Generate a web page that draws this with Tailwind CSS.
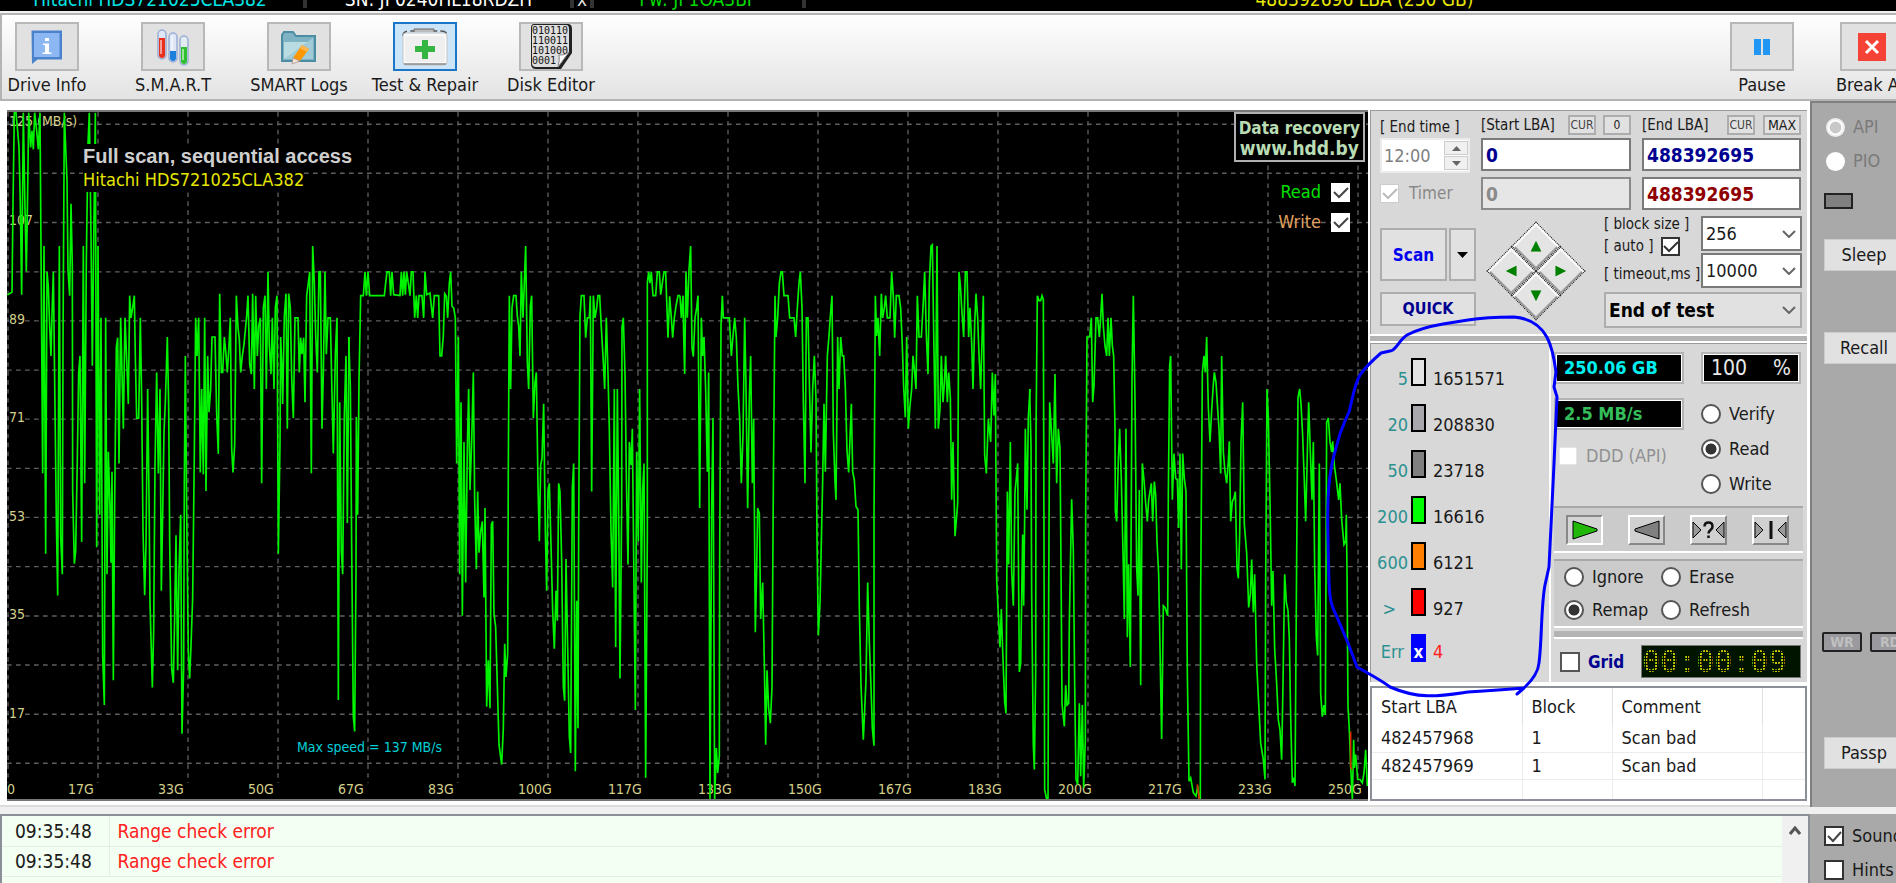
<!DOCTYPE html>
<html lang="en">
<head>
<meta charset="utf-8">
<title>Drive test and repair</title>
<script src="https://cdn.jsdelivr.net/npm/@tailwindcss/browser@4"></script>
</head>
<body class="relative flex min-h-screen flex-col overflow-hidden bg-[#f0f0f0] font-['DejaVu_Sans_Condensed','Noto_Sans',sans-serif] text-[17px] leading-5 text-[#1a1a1a]">

<!-- Drive identification strip -->
<header class="flex h-[11px] shrink-0 items-end gap-[3px] overflow-hidden bg-black pb-[3px] text-[19px] leading-[18px] whitespace-nowrap">
  <div class="w-[300px] shrink-0 text-center text-[#00e5e5]">Hitachi HDS721025CLA382</div>
  <div class="h-7 w-1 shrink-0 bg-[#333]"></div>
  <div class="w-[257px] shrink-0 text-center text-white">SN: JP0240HL18RDZH</div>
  <button class="h-[18px] w-6 shrink-0 border-x-4 border-[#333] text-center text-[#ddd]">x</button>
  <div class="w-[202px] shrink-0 text-center text-[#00d800]">Fw: JP1OA3BF</div>
  <div class="h-7 w-1 shrink-0 bg-[#333]"></div>
  <div class="grow pl-6 text-center text-[#e8e800]">488392696 LBA (250 GB)</div>
</header>

<!-- Toolbar -->
<nav class="mt-0.5 flex h-[88px] w-full shrink-0 justify-between border-t-2 border-b-2 border-l-2 border-[#b4b4b4] bg-linear-to-b from-white to-[#e3e3e3] text-[18px] whitespace-nowrap">
  <div class="-ml-[18px] flex pt-[7px]">
    <button class="flex w-[126px] flex-col items-center gap-1">
      <span class="flex h-[49px] w-16 items-center justify-center border-2 border-[#b8b8b8] bg-[#e1e1e1]">
        <svg width="34" height="36" viewBox="0 0 34 36"><path d="M1.500 1.500H32v29H7.500L2 35z" fill="#4a82cc"/><path d="M4 4h25.500v24H4z" fill="#8cb7f2"/><path d="M15 9h4v3h-4zM13 14.500h6v9h2.500V25H12.500v-1.500H15V16h-2z" fill="#fff"/></svg>
      </span>Drive Info
    </button>
    <button class="flex w-[126px] flex-col items-center gap-1">
      <span class="flex h-[49px] w-16 items-center justify-center border-2 border-[#b8b8b8] bg-[#e1e1e1]">
        <svg width="34" height="38" viewBox="0 0 34 38"><g stroke-width="1.500"><rect x="2" y="2" width="8" height="29" rx="4" fill="#dfe7f6" stroke="#9aaed4"/><path d="M3 10h6v17a3 3 0 0 1-6 0z" fill="#e8301c"/><rect x="13" y="5" width="8" height="29" rx="4" fill="#dfe7f6" stroke="#9aaed4"/><path d="M14 23h6v7a3 3 0 0 1-6 0z" fill="#1d7fdc"/><rect x="24" y="8" width="8" height="29" rx="4" fill="#e3ecf0" stroke="#9aaed4"/><path d="M25 19h6v14a3 3 0 0 1-6 0z" fill="#2fc02f"/></g><path d="M5 12v14M16 8v14M27 21v11" stroke="#fff" stroke-width="1.500" opacity=".7"/></svg>
      </span>S.M.A.R.T
    </button>
    <button class="flex w-[126px] flex-col items-center gap-1">
      <span class="flex h-[49px] w-16 items-center justify-center border-2 border-[#b8b8b8] bg-[#e1e1e1]">
        <svg width="38" height="36" viewBox="0 0 38 36"><path d="M2 32V6l2-3h9l3 4h19v25z" fill="#7fb3c4" stroke="#4d8da4" stroke-width="2"/><path d="M4 13h29v17H4z" fill="#b9dbe2"/><path d="M4 30 33 9v21z" fill="#a1cbd6"/><path d="m22 16 7 4-9 12-7-3z" fill="#ff9800"/><path d="m13 29 7 3-8 3z" fill="#f3e5d5" stroke="#a88" stroke-width=".7"/><path d="m22 16 7 4-2 3-7-4z" fill="#ffb74d"/></svg>
      </span>SMART Logs
    </button>
    <button class="flex w-[126px] flex-col items-center gap-1">
      <span class="flex h-[49px] w-16 items-center justify-center border-2 border-[#1b76c8] bg-[#cce4f7]">
        <svg width="48" height="40" viewBox="0 0 48 40"><path d="M2 9Q2 4 8 4h32q6 0 6 5" fill="none" stroke="#555" stroke-width="1.500" stroke-dasharray="7 3"/><path d="M13 5V2h20v3" fill="#bbb" stroke="#666"/><rect x="2" y="6" width="44" height="32" rx="3" fill="#fafafa" stroke="#c4c4c4"/><rect x="4" y="9" width="40" height="26" rx="2" fill="#efefef"/><path d="M3 37h42" stroke="#888" stroke-width="1.500"/><path d="M21 13h6v6h7v6h-7v7h-6v-7h-7v-6h7z" fill="#35b542"/></svg>
      </span>Test &amp; Repair
    </button>
    <button class="flex w-[126px] flex-col items-center gap-1">
      <span class="flex h-[49px] w-16 items-center justify-center border-2 border-[#b8b8b8] bg-[#e1e1e1]">
        <svg width="44" height="48" viewBox="0 0 44 48"><path d="M5 1h34q4 0 4 5v24L32 46H7q-5 0-5-5V5q0-4 3-4z" fill="#222"/><path d="M5 2h32q3 0 3 4v23L29 44H7q-4 0-4-4V5q0-3 2-3z" fill="#dedede"/><g fill="#111" font-family="DejaVu Sans Mono" font-size="10"><text x="3" y="11">010110</text><text x="3" y="21">110011</text><text x="3" y="31">101000</text><text x="3" y="41">0001</text></g><path d="M29 44q2-7 1-12 5 1 10-3z" fill="#fff" stroke="#888"/></svg>
      </span>Disk Editor
    </button>
  </div>
  <div class="flex gap-[46px] pt-[7px]">
    <button class="flex w-16 flex-col items-center gap-1">
      <span class="flex h-[49px] w-16 items-center justify-center border-2 border-[#b8b8b8] bg-[#e1e1e1]">
        <svg width="16" height="16"><path d="M0 0h7v16H0zM9 0h7v16H9z" fill="#2196f3"/></svg>
      </span>Pause
    </button>
    <button class="-mr-2 flex w-16 flex-col items-start gap-1">
      <span class="flex h-[49px] w-16 items-center justify-center border-2 border-[#b8b8b8] bg-[#e1e1e1]">
        <svg width="28" height="28"><path d="M0 0h28v28H0z" fill="#f44336"/><path d="m8 8 12 12M20 8 8 20" stroke="#fff" stroke-width="3"/></svg>
      </span><span class="-ml-1">Break All</span>
    </button>
  </div>
</nav>

<main class="flex shrink-0">
  <div class="flex min-w-0 grow border-b-2 border-[#dcdcdc] bg-white pt-[9px] pb-1 pl-[7px]">

    <!-- Speed graph -->
    <section class="relative min-w-0 grow overflow-hidden border-y-2 border-[#777] bg-black text-sm leading-4 text-[#d4d08a]">
      <svg class="absolute inset-0 h-full w-full" viewBox="21 33 4083 2076" preserveAspectRatio="none">
        <g stroke="#5f5f5f" stroke-width="4" stroke-dasharray="14 13">
          <path d="M24 33V2060M294 33V2060M564 33V2060M834 33V2060M1104 33V2060M1374 33V2060M1644 33V2060M1914 33V2060M2184 33V2060M2454 33V2060M2724 33V2060M2994 33V2060M3264 33V2060M3534 33V2060M3804 33V2060M4074 33V2060"/>
          <path d="M21 70H4104M21 218H4104M21 367H4104M21 516H4104M21 664H4104M21 813H4104M21 961H4104M21 1110H4104M21 1258H4104M21 1407H4104M21 1556H4104M21 1704H4104M21 1853H4104M21 2001H4104"/>
        </g>
      </svg>
      <div class="absolute inset-0 left-0.5">
        <span class="absolute top-[0.2%]">125 (MB/s)</span>
        <span class="absolute top-[14.500%] bg-black">107</span>
        <span class="absolute top-[28.900%] bg-black">89</span>
        <span class="absolute top-[43.200%] bg-black">71</span>
        <span class="absolute top-[57.600%] bg-black">53</span>
        <span class="absolute top-[71.900%] bg-black">35</span>
        <span class="absolute top-[86.300%] bg-black">17</span>
      </div>
      <div class="absolute inset-x-0 bottom-0.5 flex overflow-hidden whitespace-nowrap">
        <span class="w-[4.480%] shrink-0">0</span>
        <span class="w-[6.613%] shrink-0">17G</span><span class="w-[6.613%] shrink-0">33G</span><span class="w-[6.613%] shrink-0">50G</span><span class="w-[6.613%] shrink-0">67G</span><span class="w-[6.613%] shrink-0">83G</span><span class="w-[6.613%] shrink-0">100G</span><span class="w-[6.613%] shrink-0">117G</span><span class="w-[6.613%] shrink-0">133G</span><span class="w-[6.613%] shrink-0">150G</span><span class="w-[6.613%] shrink-0">167G</span><span class="w-[6.613%] shrink-0">183G</span><span class="w-[6.613%] shrink-0">200G</span><span class="w-[6.613%] shrink-0">217G</span><span class="w-[6.613%] shrink-0">233G</span><span>250G</span>
      </div>
      <svg class="absolute inset-0 h-full w-full" viewBox="21 33 4083 2076" preserveAspectRatio="none" fill="none" stroke="#00f400" stroke-width="5">
        <path d="M22 585 36 578 39 312 43 35 48 35 53 90 57 140 61 310 65 585 70 35 74 275 79 515 83 270 86 35 92 140 96 90 100 146 104 35 110 90 115 146 120 35 124 580 128 1125 132 438 137 1368 141 516 145 560 149 680 153 770 156 645 160 516 165 925 169 1262 173 1494 178 438 182 1316 187 1430 189 735 193 35 197 140 201 238 204 510 209 588 213 310 217 500 218 1178 223 1398 227 1360 232 1080 236 820 240 770 245 1332 250 438 254 1155 259 480 264 130 268 35 273 405 277 800 281 435 286 35 290 1348 294 438 299 1250 303 655 308 1675 313 1825 317 655 321 1430 325 1060 330 1230 333 1395 336 1120 340 1750 344 1210 349 745 353 715 357 1095 362 655 366 820 370 990 375 655 380 780 385 915 389 588 393 655 398 625 403 588 406 775 410 958 416 958 421 655 425 905 429 1295 434 1493 438 1340 443 870 447 1190 450 1515 457 1772 461 1600 465 1100 470 820 475 1125 480 870 484 1480 488 1250 492 1000 496 910 502 713 506 920 509 1330 515 1715 520 1758 524 1560 528 1312 533 1720 537 1420 542 1250 546 1912 551 1710 553 1145 556 770 560 1240 565 1666 569 1745 573 1645 578 1500 583 1060 587 655 591 770 596 655 601 1122 605 870 610 1128 614 655 618 1178 623 770 627 940 632 870 636 713 645 713 650 945 655 1066 659 582 664 820 668 820 673 713 678 765 682 820 687 740 691 655 695 1050 699 1122 704 1040 709 588 714 685 718 720 722 820 727 770 732 735 740 650 744 588 749 795 754 825 758 582 763 870 767 588 772 770 776 680 781 655 785 1155 790 625 795 588 799 870 804 516 808 740 813 825 817 655 822 870 826 625 831 588 835 1368 840 1035 842 713 846 815 848 915 853 650 858 582 862 990 866 582 871 625 875 835 880 958 885 655 894 655 898 820 902 715 906 765 911 715 915 910 920 588 925 550 929 516 934 1125 938 438 943 550 947 705 952 820 957 516 961 516 966 990 970 820 975 516 979 765 984 655 991 655 995 840 1000 1065 1006 765 1011 655 1015 1810 1019 910 1024 1360 1028 1430 1033 950 1038 770 1042 1275 1047 713"/>
        <path transform="translate(1020)" d="M26 713 31 860 35 1345 40 1860 44 1905 48 1430 49 955 53 1250 57 845 62 588 70 588 75 516 79 588 84 516 89 588 133 588 137 550 141 516 148 516 152 588 156 516 161 585 180 588 184 516 188 588 192 516 196 585 200 516 205 550 210 588 214 516 219 516 224 655 229 588 233 655 237 588 246 588 251 655 255 516 260 585 270 580 274 620 278 655 283 588 296 588 300 770 305 770 310 710 314 582 319 590 323 655 328 550 332 516 336 620 341 625 346 655 350 1095 355 713 359 1430 363 910 367 1555 372 1030 377 1455 382 1050 386 870 390 1175 395 1030 400 820 404 1205 409 1415 413 1180 417 1365 422 1300 427 1270 432 1500 435 1230 440 1830 445 1690 450 1835 454 1280 458 1270 462 1550 467 1590 472 1765 477 1945 485 2005 490 1895 494 1640 498 1740 503 1670 505 1095 508 588 512 870 516 625 521 588 528 588 532 650 536 680 540 770 544 516 549 655 553 550 557 438 562 790 566 870 571 620 575 588 580 958 585 850 589 820 594 1160 598 1330 602 1100 606 1080 611 915 616 1300 620 1480 624 1180 628 1155 633 1340 638 1540 643 1655 648 1480 652 1570 656 1155 660 1180 665 1390 670 1770 674 1812 678 1384 683 1650 688 1920 692 1970 697 1170 701 1095 706 2025 710 1510 714 1895 716 1300 720 650 724 588 732 588 737 715 742 655 748 655 751 588 755 1180 760 588 765 655 770 625 774 588 779 588 784 685 789 770 794 870 799 655 804 825 808 990 813 1295 818 1470 823 870 827 1650 832 870 836 1230 840 1745 845 1225 846 685 850 655 855 825 859 1130 864 1400 868 1030 873 1100 877 990 882 1465 886 1840 890 1060 895 1330 899 870 904 1455 908 1175 912 1095 917 2045 922 1310 922 550 926 516 930 550 934 516 939 588 947 588 952 516 958 516 962 585 967 550 972 516 977 516 980 600 984 715 989 590 994 655 998 715 1003 655 1008 620 1014 588 1020 588"/>
        <path transform="translate(2040)" d="M0 588 4 655 9 588 11 705 14 825 18 516 22 655 27 510 32 438 36 745 40 772 45 655 50 625 54 588 59 1230 64 655 68 770 72 713 77 870 82 1120 86 820 90 2110 95 1230 99 958 104 2110 109 1955 113 2030 118 1980 119 1380 123 680 127 588 130 655 148 655 154 770 159 710 164 655 169 715 174 865 179 960 184 1155 189 1010 194 655 198 865 203 1230 208 900 212 770 217 1155 221 960 226 1605 230 1415 233 1230 238 1245 242 1565 248 1455 253 1700 257 1945 261 1720 266 1835 271 1880 276 1770 280 1165 285 588 288 713 293 655 298 550 303 516 307 516 312 588 324 588 329 655 342 655 347 713 352 625 357 550 361 516 366 625 370 905 375 1155 379 655 384 655 389 890 393 1062 398 870 403 770 408 900 411 1320 415 1615 420 1520 428 1145 432 915 436 1120 442 770 447 710 451 650 456 588 460 1000 465 1150 468 1205 473 713 477 870 482 713 487 770 491 770 496 865 501 1055 506 1122 510 1020 514 915 518 1120 523 1145 528 1225 534 1235 538 1530 543 1765 550 1930 554 1840 558 1750 563 1455 568 1635 573 1770 577 1895 582 1948 582 1265 586 588 590 710 594 655 599 770 604 582 608 655 613 625 617 588 622 655 630 655 635 516 640 590 644 715 649 588 657 588 662 625 667 740 671 865 676 955 680 713 685 990 690 920 695 870 699 770 704 820 708 870 712 588 717 713 724 713 729 625 734 516 739 705 744 825 748 550 753 438 757 434 762 755 766 990 771 438 775 990 780 930 784 770 789 910 793 855 797 770 802 910 806 820 811 895 815 1205 819 1030 825 1315 829 1268 833 1215 837 516 841 555 845 625 851 713 856 516 861 516 866 713 870 625 875 730 879 870 884 675 888 582 893 655 897 765 902 870 906 725 910 588 914 1070 919 1125 925 960 932 1030 937 820 942 950 946 825 950 1445 955 1550 960 1650 964 1535 968 1660 974 1815 978 1850 982 1180 986 1400 991 1030 995 1420 1000 1525 1005 1180 1010 1130 1013 1095 1018 1725 1022 1700 1028 1310 1031 1525 1034 1255 1036 990 1041 1235 1045 955 1050 870"/>
        <path transform="translate(3060)" d="M29 870 33 1040 35 1490 40 1945 43 2020 47 1730 48 1010 52 588 57 603 62 603 66 588 70 600 74 2080 80 2110 84 2110 86 1510 89 910 94 990 100 1095 105 825 110 1155 115 990 120 1050 123 1400 126 1820 133 1890 137 1765 141 1825 146 1820 148 1576 155 1203 160 1360 164 1760 168 2050 173 2065 178 1820 182 2040 187 1825 191 2075 196 1930 197 1255 201 713 209 713 214 655 218 910 222 860 228 655 233 655 238 713 242 655 246 582 250 680 255 740 260 770 264 655 268 770 273 655 277 740 281 770 285 990 286 1240 290 1270 295 1085 299 990 304 1145 309 1360 313 1565 318 990 322 1620 326 1400 331 1710 336 840 340 588 345 900 350 1410 354 1495 358 1175 362 1765 367 1095 372 1145 377 1215 382 1270 386 1205 390 1180 394 1155 398 1270 403 1150 407 1190 411 1330 416 1430 420 1650 425 1928 430 1525 435 1530 443 1555 445 1190 449 800 452 770 457 1205 462 1065 467 1140 472 1145 476 1290 480 1065 484 1415 488 1065 493 1140 498 1180 502 1730 507 2055 512 2045 520 2090 528 2100 533 2070 538 2110 541 2110 542 1490 547 820 552 770 556 820 560 713 565 925 570 1030 575 935 579 870 583 820 588 850 593 930 597 990 602 1125 605 770 610 1060 615 1120 620 1155 625 1090 628 1028 632 1270 637 1210 642 1200 646 1180 651 1410 655 1442 659 1310 663 1030 668 910 673 1280 680 1365 686 1530 691 1490 695 1385 700 1545 704 1430 710 1700 716 1820 722 1940 730 1990 735 2050 737 1455 741 870 745 955 750 1210 755 1525 759 1420 764 1655 770 1760 775 1870 780 1900 785 1990 789 1760 794 1430 799 1515 804 1540 808 1625 812 1860 817 2060 822 2045 825 2070 830 1380 834 895 839 870 843 915 848 1010 853 1150 857 1270 862 1065 866 910 871 1060 876 1205 880 1030 884 1405 889 1620 893 1675 898 1095 902 1790 907 1860 912 1825 916 1855 918 1420 920 970 925 958 930 1030 935 1060 938 1028 943 1100 949 1145 956 1205 960 1155 965 1265 972 1340 977 1330 979 1250 981 1420 984 1830 988 1900 992 2010 997 2110 1001 1930 1003 2015 1007 1975 1013 2050 1020 2050 1027 2060 1032 2030 1037 1960 1042 2070"/>
        <path transform="translate(3060)" stroke="#d42a00" d="M532 2065 538 2110M992 1905V2010L996 2020"/>
      </svg>
      <div class="absolute top-8 left-[76px] flex flex-col items-start whitespace-nowrap">
        <h1 class="bg-black font-['Liberation_Sans',sans-serif] text-[20px] leading-6 font-bold text-[#cfcfcf]">Full scan, sequential access</h1>
        <p class="bg-black text-[18px] leading-6 text-[#e6e600]">Hitachi HDS721025CLA382</p>
      </div>
      <p class="absolute bottom-[44px] left-[290px] text-[#00cfd6]">Max speed = 137 MB/s</p>
      <div class="absolute top-0 right-[3px] flex flex-col items-end gap-5">
        <a href="#" class="block border-2 border-[#b0b0b0] bg-black px-[3px] pt-1 pb-0.5 text-center font-bold whitespace-nowrap text-[#b9dcb4]"><span class="block text-[17px] leading-5">Data recovery</span><span class="block text-[19px] leading-5">www.hdd.by</span></a>
        <div class="flex flex-col items-end gap-2.5 pr-[15px] text-lg leading-5">
          <label class="flex items-center gap-2.5 text-[#00e000]">Read<span class="grid"><input type="checkbox" checked class="col-start-1 row-start-1 size-[19px] appearance-none bg-white"><svg class="pointer-events-none col-start-1 row-start-1" width="19" height="19"><path d="m3 9 5 5 9-9" fill="none" stroke="#444" stroke-width="2"/></svg></span></label>
          <label class="flex items-center gap-2.5 text-[#e0a060]">Write<span class="grid"><input type="checkbox" checked class="col-start-1 row-start-1 size-[19px] appearance-none bg-white"><svg class="pointer-events-none col-start-1 row-start-1" width="19" height="19"><path d="m3 9 5 5 9-9" fill="none" stroke="#444" stroke-width="2"/></svg></span></label>
        </div>
      </div>
    </section>

    <!-- Scan controls -->
    <div class="flex w-[442px] shrink-0 flex-col pr-[3px] pl-0.5">
      <section class="flex flex-col border-t border-l border-[#9a9a9a] bg-[#d8d8d8] pt-1 pr-[5px] pl-[9px]">
        <div class="flex gap-[11px]">
          <div class="flex w-[90px] flex-col">
            <label for="endtime" class="h-[23px] text-[15px] leading-6 whitespace-nowrap">[ End time ]</label>
            <div class="flex h-[35px] items-center border-2 border-[#ececec] bg-white pl-0.5">
              <input id="endtime" value="12:00" disabled class="w-[60px] bg-white text-[18px] text-[#808080]">
              <div class="flex flex-col gap-px">
                <button aria-label="Later" class="flex h-3.5 w-6 items-center justify-center border border-[#ccc] bg-[#f0f0f0]"><svg width="9" height="5"><path d="M0 5 4.500 0 9 5z" fill="#666"/></svg></button>
                <button aria-label="Earlier" class="flex h-3.5 w-6 items-center justify-center border border-[#ccc] bg-[#f0f0f0]"><svg width="9" height="5"><path d="M0 0h9L4.500 5z" fill="#666"/></svg></button>
              </div>
            </div>
            <label class="mt-2.5 flex items-center gap-2.5 text-[17px] text-[#888]"><span class="grid"><input type="checkbox" checked disabled class="col-start-1 row-start-1 size-[19px] appearance-none border border-[#ccc] bg-white"><svg class="pointer-events-none col-start-1 row-start-1" width="19" height="19"><path d="m3 9 5 5 9-9" fill="none" stroke="#bbb" stroke-width="2"/></svg></span>Timer</label>
          </div>
          <div class="flex w-[150px] flex-col">
            <div class="mb-[3px] flex h-5 items-center text-[15px] whitespace-nowrap">
              <label for="startlba" class="grow leading-6">[Start LBA]</label>
              <button class="h-5 w-7 border-2 border-[#adadad] bg-[#e1e1e1] text-xs leading-4 text-[#444]">CUR</button>
              <button class="ml-[7px] h-5 w-7 border-2 border-[#adadad] bg-[#e1e1e1] text-xs leading-4">0</button>
            </div>
            <input id="startlba" value="0" class="h-[33px] w-full border-2 border-[#7a7a7a] bg-white px-[3px] text-[19px] font-bold text-[#000090]">
            <input aria-label="Current start LBA" value="0" disabled class="mt-1.5 h-[33px] w-full border-2 border-[#8a8a8a] bg-[#e6e6e6] px-[3px] text-[19px] font-bold text-[#8a8a8a]">
          </div>
          <div class="flex w-[159px] flex-col">
            <div class="mb-[3px] flex h-5 items-center text-[15px] whitespace-nowrap">
              <label for="endlba" class="grow leading-6">[End LBA]</label>
              <button class="h-5 w-7 border-2 border-[#adadad] bg-[#e1e1e1] text-xs leading-4 text-[#444]">CUR</button>
              <button class="ml-2 h-5 w-[38px] border-2 border-[#adadad] bg-[#e1e1e1] text-sm leading-4">MAX</button>
            </div>
            <input id="endlba" value="488392695" class="h-[33px] w-full border-2 border-[#7a7a7a] bg-white px-[3px] text-[19px] font-bold text-[#000090]">
            <input aria-label="Current end LBA" value="488392695" class="mt-1.5 h-[33px] w-full border-2 border-[#7a7a7a] bg-white px-[3px] text-[19px] font-bold text-[#900000]">
          </div>
        </div>
        <div class="mt-1.5 flex h-[118px] justify-between">
          <div class="flex w-24 flex-col gap-[11px] pt-3">
            <div class="flex gap-0.5">
              <button class="h-[53px] w-[67px] border-2 border-[#adadad] bg-[#e1e1e1] text-[17px] font-bold text-[#0000f0]">Scan</button>
              <button aria-label="Scan options" class="flex h-[53px] w-[27px] items-center justify-center border-2 border-[#adadad] bg-[#e1e1e1]"><svg width="11" height="6"><path d="M0 0h11L5.500 6z"/></svg></button>
            </div>
            <button class="h-[34px] w-24 border-2 border-[#adadad] bg-[#e1e1e1] text-base font-bold text-[#000090]">QUICK</button>
          </div>
          <div class="mt-5 mr-2 grid size-[70px] rotate-45 grid-cols-2">
            <button aria-label="Up" class="flex items-center justify-center border border-dotted border-black bg-[#e4e4e4] shadow-[inset_2px_2px_0_#fff,inset_-2px_-2px_0_#9a9a9a]"><svg class="-rotate-45" width="11" height="11"><path d="M0 11 5.500 0 11 11z" fill="#008000"/></svg></button>
            <button aria-label="Right" class="flex items-center justify-center border border-dotted border-black bg-[#e4e4e4] shadow-[inset_2px_2px_0_#fff,inset_-2px_-2px_0_#9a9a9a]"><svg class="-rotate-45" width="11" height="11"><path d="M0 0 11 5.500 0 11z" fill="#008000"/></svg></button>
            <button aria-label="Left" class="flex items-center justify-center border border-dotted border-black bg-[#e4e4e4] shadow-[inset_2px_2px_0_#fff,inset_-2px_-2px_0_#9a9a9a]"><svg class="-rotate-45" width="11" height="11"><path d="M11 0 0 5.500 11 11z" fill="#008000"/></svg></button>
            <button aria-label="Down" class="flex items-center justify-center border border-dotted border-black bg-[#e4e4e4] shadow-[inset_2px_2px_0_#fff,inset_-2px_-2px_0_#9a9a9a]"><svg class="-rotate-45" width="11" height="11"><path d="M0 0h11L5.500 11z" fill="#008000"/></svg></button>
          </div>
          <div class="flex w-[198px] flex-col gap-1">
            <div class="flex justify-between text-[15px] whitespace-nowrap">
              <div class="flex flex-col">
                <label for="blocksize" class="h-[18px] leading-4">[ block size ]</label>
                <label class="flex h-6 items-center gap-2">[ auto ]<span class="grid"><input type="checkbox" checked class="col-start-1 row-start-1 size-[19px] appearance-none border-2 border-[#333] bg-white"><svg class="pointer-events-none col-start-1 row-start-1" width="19" height="19"><path d="m3 9 5 5 9-9" fill="none" stroke="#333" stroke-width="2"/></svg></span></label>
                <label for="timeout" class="mt-1.5 leading-5">[ timeout,ms ]</label>
              </div>
              <div class="flex w-[101px] flex-col gap-0.5 text-[18px]">
                <div class="grid"><select id="blocksize" class="col-start-1 row-start-1 h-[35px] w-full appearance-none border-2 border-[#7a7a7a] bg-white pl-[3px]"><option>256</option></select><svg class="pointer-events-none col-start-1 row-start-1 mr-1.5 self-center justify-self-end" width="14" height="8"><path d="m1 1 6 6 6-6" fill="none" stroke="#666" stroke-width="2"/></svg></div>
                <div class="grid"><select id="timeout" class="col-start-1 row-start-1 h-[35px] w-full appearance-none border-2 border-[#7a7a7a] bg-white pl-[3px]"><option>10000</option></select><svg class="pointer-events-none col-start-1 row-start-1 mr-1.5 self-center justify-self-end" width="14" height="8"><path d="m1 1 6 6 6-6" fill="none" stroke="#666" stroke-width="2"/></svg></div>
              </div>
            </div>
            <div class="grid"><select aria-label="After the scan" class="col-start-1 row-start-1 h-9 w-full appearance-none border-2 border-[#adadad] bg-[#e1e1e1] pl-[3px] text-[19px] font-bold text-black"><option>End of test</option></select><svg class="pointer-events-none col-start-1 row-start-1 mr-1.5 self-center justify-self-end" width="14" height="8"><path d="m1 1 6 6 6-6" fill="none" stroke="#666" stroke-width="2"/></svg></div>
          </div>
        </div>
      </section>
      <div class="h-[9px] border-y-2 border-white bg-[#b4b4b4]"></div>

      <section class="flex border-t border-l border-[#9a9a9a] bg-[#d8d8d8]">
        <!-- Block access time counters, ms -->
        <dl class="flex w-[180px] flex-col gap-[15px] border-r-2 border-white pt-3.5 pb-5 text-[18px] leading-5">
          <div class="flex h-[31px] gap-[3px]"><dt class="w-[37px] self-end text-right text-[#2b9090]">5</dt><dd class="flex gap-[7px]"><span class="h-7 w-[15px] border-2 border-black bg-[#e4e4e4]"></span><span class="self-end">1651571</span></dd></div>
          <div class="flex h-[31px] gap-[3px]"><dt class="w-[37px] self-end text-right text-[#2b9090]">20</dt><dd class="flex gap-[7px]"><span class="h-7 w-[15px] border-2 border-black bg-[#a8a8ac]"></span><span class="self-end">208830</span></dd></div>
          <div class="flex h-[31px] gap-[3px]"><dt class="w-[37px] self-end text-right text-[#2b9090]">50</dt><dd class="flex gap-[7px]"><span class="h-7 w-[15px] border-2 border-black bg-[#808080]"></span><span class="self-end">23718</span></dd></div>
          <div class="flex h-[31px] gap-[3px]"><dt class="w-[37px] self-end text-right text-[#2b9090]">200</dt><dd class="flex gap-[7px]"><span class="h-7 w-[15px] border-2 border-black bg-[#00ff00]"></span><span class="self-end">16616</span></dd></div>
          <div class="flex h-[31px] gap-[3px]"><dt class="w-[37px] self-end text-right text-[#2b9090]">600</dt><dd class="flex gap-[7px]"><span class="h-7 w-[15px] border-2 border-black bg-[#ff8000]"></span><span class="self-end">6121</span></dd></div>
          <div class="flex h-[31px] gap-[3px]"><dt class="w-[37px] self-end pr-3 text-right text-[#2b9090]">&gt;</dt><dd class="flex gap-[7px]"><span class="h-7 w-[15px] border-2 border-black bg-[#ff0000]"></span><span class="self-end">927</span></dd></div>
          <div class="flex h-7 gap-[3px]"><dt class="w-[37px] self-end pr-1 text-right text-[#2b9090]">Err</dt><dd class="flex gap-[7px] text-[#ff2020]"><span class="flex h-7 w-[15px] items-end justify-center bg-[#0000ff] text-[17px] font-bold text-white">x</span><span class="self-end">4</span></dd></div>
        </dl>

        <div class="flex grow flex-col pt-2 pr-1 pl-[3px]">
          <div class="flex justify-between pr-0.5">
            <div class="flex flex-col gap-3.5">
              <output class="block h-8 w-[130px] border-2 border-[#b4b4b4] bg-black pl-2 text-[18px] leading-7 font-bold text-[#00f0f0] outline-1 -outline-offset-3 outline-white">250.06 GB</output>
              <output class="block h-8 w-[130px] border-2 border-[#b4b4b4] bg-black pl-2 text-[18px] leading-7 font-bold text-[#35bd5b] outline-1 -outline-offset-3 outline-white">2.5 MB/s</output>
              <label class="flex items-center gap-[9px] pt-0.5 pl-[5px] text-[18px] whitespace-nowrap text-[#909090]"><input type="checkbox" disabled class="size-[18px] appearance-none border border-[#e4e4e4] bg-white">DDD (API)</label>
            </div>
            <div class="flex w-[100px] flex-col">
              <output class="flex h-8 justify-between border-2 border-[#b4b4b4] bg-black px-2 text-[21px] leading-7 text-[#e8e8e8] outline-1 -outline-offset-3 outline-white"><span>100</span><span>%</span></output>
              <fieldset class="mt-5 flex flex-col gap-[15px] text-[18px]">
                <label class="flex items-center gap-2"><input type="radio" name="op" class="size-5 appearance-none rounded-full border-2 border-[#555] bg-white">Verify</label>
                <label class="flex items-center gap-2"><input type="radio" name="op" checked class="size-5 appearance-none rounded-full border-2 border-[#555] bg-[radial-gradient(circle,#333_45%,white_52%)]">Read</label>
                <label class="flex items-center gap-2"><input type="radio" name="op" class="size-5 appearance-none rounded-full border-2 border-[#555] bg-white">Write</label>
              </fieldset>
            </div>
          </div>
          <div class="mt-3 flex h-[47px] justify-between border-t-2 border-b-2 border-t-[#a8a8a8] border-b-white bg-[#cbcbcb] pt-[7px] pr-3.5 pl-3">
            <button aria-label="Forward" class="flex h-[30px] w-[37px] items-center justify-center border-2 border-t-[#888] border-r-white border-b-white border-l-[#888] bg-[#d4d4d4]"><svg width="26" height="20"><path d="M1 1v18l24-8V9z" fill="#22b80a" stroke="#000"/></svg></button>
            <button aria-label="Backward" class="flex h-[30px] w-[37px] items-center justify-center border-2 border-t-white border-r-[#888] border-b-[#888] border-l-white bg-[#d0d0d0]"><svg width="26" height="20"><path d="M25 1v18L1 11V9z" fill="#808080" stroke="#000"/></svg></button>
            <button aria-label="Random" class="flex h-[30px] w-[37px] items-center justify-center border-2 border-t-white border-r-[#888] border-b-[#888] border-l-white bg-[#d0d0d0]"><svg width="33" height="20"><path d="M1 2v16l8-8zM32 2v16l-8-8z" fill="#999" stroke="#000"/><path d="M12.500 6.500q0-4 4-4t4 4q0 2-2 3.500t-2 3.500M16.500 15.500V18" fill="none" stroke="#111" stroke-width="2.500"/></svg></button>
            <button aria-label="Butterfly" class="flex h-[30px] w-[37px] items-center justify-center border-2 border-t-white border-r-[#888] border-b-[#888] border-l-white bg-[#d0d0d0]"><svg width="33" height="20"><path d="M1 2v16l8-8zM32 2v16l-8-8z" fill="#999" stroke="#000"/><path d="M17 1v18" stroke="#111" stroke-width="3"/></svg></button>
          </div>
          <fieldset class="mt-1.5 h-[69px] border-t-2 border-b-2 border-t-[#a8a8a8] border-b-white bg-[#cbcbcb] pt-1.5 pl-2.5 text-[18px]">
            <div class="grid grid-cols-[97px_1fr] gap-y-[13px]">
              <label class="flex items-center gap-2"><input type="radio" name="mode" class="size-5 appearance-none rounded-full border-2 border-[#555] bg-white">Ignore</label>
              <label class="flex items-center gap-2"><input type="radio" name="mode" class="size-5 appearance-none rounded-full border-2 border-[#555] bg-white">Erase</label>
              <label class="flex items-center gap-2"><input type="radio" name="mode" checked class="size-5 appearance-none rounded-full border-2 border-[#555] bg-[radial-gradient(circle,#333_45%,white_52%)]">Remap</label>
              <label class="flex items-center gap-2"><input type="radio" name="mode" class="size-5 appearance-none rounded-full border-2 border-[#555] bg-white">Refresh</label>
            </div>
          </fieldset>
          <div class="mt-[3px] h-2 border-b-2 border-white bg-[#b4b4b4]"></div>
          <div class="mt-1.5 flex items-center justify-between pr-0.5 pl-1.5">
            <label class="flex items-center gap-2 text-[17px] font-bold text-[#000090]"><input type="checkbox" class="size-5 appearance-none border-2 border-[#555] bg-white">Grid</label>
            <output class="relative block h-[33px] w-40 overflow-hidden border border-[#777] bg-[#001400] font-['DejaVu_Sans_Mono',monospace] text-[30px] leading-8 text-[#c8c800]">00:00:09<span class="absolute inset-0 bg-[linear-gradient(#001400_1px,transparent_1px),linear-gradient(90deg,#001400_1px,transparent_1px)] bg-size-[3px_3px]"></span></output>
          </div>
        </div>
      </section>

      <!-- Defect list -->
      <div class="mt-1 grow border-2 border-[#8a8f98] bg-white text-[18px]">
        <table class="w-full table-fixed border-collapse text-left whitespace-nowrap">
          <thead><tr class="h-[37px]"><th class="w-[150px] border-r border-[#e0e0e0] pl-[9px] font-normal">Start LBA</th><th class="w-[90px] border-r border-[#e0e0e0] pl-[9px] font-normal">Block</th><th class="w-[150px] border-r border-[#e0e0e0] pl-[9px] font-normal">Comment</th><th></th></tr></thead>
          <tbody>
            <tr class="h-[27px] border-b border-[#ececec]"><td class="border-r border-[#ececec] pl-[9px]">482457968</td><td class="border-r border-[#ececec] pl-[9px]">1</td><td class="border-r border-[#ececec] pl-[9px]">Scan bad</td><td></td></tr>
            <tr class="h-[27px] border-b border-[#ececec]"><td class="border-r border-[#ececec] pl-[9px]">482457969</td><td class="border-r border-[#ececec] pl-[9px]">1</td><td class="border-r border-[#ececec] pl-[9px]">Scan bad</td><td></td></tr>
            <tr class="h-5"><td class="border-r border-[#ececec]"></td><td class="border-r border-[#ececec]"></td><td class="border-r border-[#ececec]"></td><td></td></tr>
          </tbody>
        </table>
      </div>
    </div>
  </div>

  <!-- Device side bar, cut by the window edge -->
  <aside class="flex w-[86px] shrink-0 flex-col overflow-hidden border-t-2 border-l-2 border-[#808080] bg-[#a9a9a9] pl-3 text-[18px] whitespace-nowrap">
    <label class="mt-3.5 flex items-center gap-2 text-[#7a7a7a]"><input type="radio" name="bus" checked disabled class="ml-0.5 size-[19px] shrink-0 appearance-none rounded-full border-2 border-[#eee] bg-[radial-gradient(circle,#c8c8c8_50%,white_60%)]">API</label>
    <label class="mt-3.5 flex items-center gap-2 text-[#7a7a7a]"><input type="radio" name="bus" disabled class="ml-0.5 size-[19px] shrink-0 appearance-none rounded-full bg-white">PIO</label>
    <div class="mt-[22px] h-4 w-[29px] border-2 border-[#222] bg-[#808080]"></div>
    <button class="mt-[30px] h-8 w-20 border border-[#ccc] bg-[#e1e1e1]">Sleep</button>
    <button class="mt-[61px] h-8 w-20 border border-[#ccc] bg-[#e1e1e1]">Recall</button>
    <div class="mt-[268px] -ml-0.5 flex gap-2 text-sm leading-4 font-bold text-[#c0c0c0]">
      <span class="h-5 w-10 shrink-0 rounded-xs border-2 border-[#222] bg-[#9a9a9e] text-center">WR</span>
      <span class="h-5 w-10 shrink-0 rounded-xs border-2 border-[#222] bg-[#9a9a9e] text-center">RD</span>
    </div>
    <button class="mt-[85px] h-8 w-20 border border-[#ccc] bg-[#e1e1e1]">Passp</button>
  </aside>
</main>

<!-- Log -->
<footer class="mt-[7px] flex grow">
  <div class="flex min-w-0 grow border-t-2 border-x-2 border-[#8a8f98] bg-[#f2fff2]">
    <table class="h-fit grow border-collapse text-left text-[19px]">
      <tbody>
        <tr class="h-[30px] border-b border-[#e4ece4]"><td class="w-[107px] border-r border-[#e4ece4] pl-[13px]">09:35:48</td><td class="pl-2 text-[#ff2020]">Range check error</td></tr>
        <tr class="h-[30px] border-b border-[#e4ece4]"><td class="border-r border-[#e4ece4] pl-[13px]">09:35:48</td><td class="pl-2 text-[#ff2020]">Range check error</td></tr>
      </tbody>
    </table>
    <button aria-label="Scroll up" class="flex w-[26px] shrink-0 justify-center bg-[#f0f0f0] pt-2.5"><svg width="12" height="10"><path d="m1 8 5-6 5 6" fill="none" stroke="#555" stroke-width="3"/></svg></button>
  </div>
  <div class="flex w-[86px] shrink-0 flex-col gap-3.5 overflow-hidden bg-[#a9a9a9] pt-3 pl-3.5 text-[18px] whitespace-nowrap">
    <label class="flex items-center gap-2"><span class="grid shrink-0"><input type="checkbox" checked class="col-start-1 row-start-1 size-5 appearance-none border-2 border-[#333] bg-white"><svg class="pointer-events-none col-start-1 row-start-1" width="20" height="20"><path d="m4 10 5 5 8-9" fill="none" stroke="#444" stroke-width="2"/></svg></span>Sound</label>
    <label class="flex items-center gap-2"><input type="checkbox" class="size-5 shrink-0 appearance-none border-2 border-[#333] bg-white">Hints</label>
  </div>
</footer>

<!-- Hand-drawn mark round the counters -->
<svg class="pointer-events-none absolute top-[310px] right-[330px]" width="250" height="400" viewBox="1316 310 250 400"><path d="M1517 694 1524 688Q1538 675 1539 663C1542 640 1541 605 1545 585L1549 567C1551 520 1555 450 1557 397L1554 387 1556 372C1553 350 1549 320 1514 317 1495 317 1480 318 1468 320L1443 324Q1420 328 1407 335C1398 341 1396 351 1390 351L1381 353Q1366 366 1360 375C1354 385 1352 402 1349 412 1342 428 1340 430 1336 448 1328 474 1327 500 1328 540 1329 600 1329 600 1337 617L1348 643 1357 667Q1384 682 1390 687C1420 700 1440 696 1468 692Q1500 690 1524 688" fill="none" stroke="#0000ff" stroke-width="3" stroke-linejoin="round" stroke-linecap="round"/></svg>
</body>
</html>
